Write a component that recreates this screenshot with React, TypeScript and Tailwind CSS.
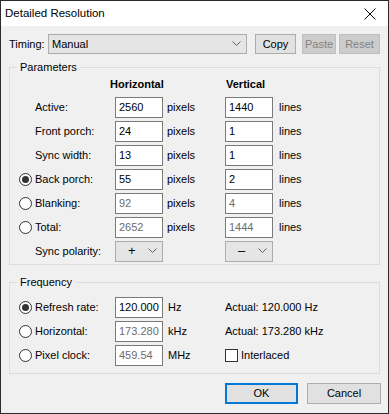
import React from 'react';

const font = { fontFamily: '"Liberation Sans", Arial, sans-serif' };

const Chevron: React.FC = () => (
  <svg width="9" height="6" viewBox="0 0 9 6" className="shrink-0">
    <polyline points="0.5,0.5 4.5,4.5 8.5,0.5" fill="none" stroke="#606060" strokeWidth="1" />
  </svg>
);

const Radio: React.FC<{ checked?: boolean }> = ({ checked }) => (
  <div className="w-[13px] h-[13px] rounded-full border border-[#333333] bg-white flex items-center justify-center shrink-0">
    {checked && <div className="w-[7px] h-[7px] rounded-full bg-[#333333]" />}
  </div>
);

const Field: React.FC<{ value: string; disabled?: boolean }> = ({ value, disabled }) => (
  <div
    className={`w-[48px] h-[21px] border border-[#7a7a7a] bg-white flex items-center pl-[3px] ${
      disabled ? 'text-[#6d6d6d]' : 'text-black'
    }`}
  >
    {value}
  </div>
);

interface RowProps {
  label: string;
  radio?: 'on' | 'off';
  h: string;
  v: string;
  disabled?: boolean;
}

const ParamRow: React.FC<RowProps> = ({ label, radio, h, v, disabled }) => (
  <div className="h-[24px] flex items-center">
    {radio ? (
      <div className="w-[105px] flex items-center pl-[9px] gap-[3px]">
        <Radio checked={radio === 'on'} />
        <span>{label}</span>
      </div>
    ) : (
      <div className="w-[105px] pl-[25px]">{label}</div>
    )}
    <Field value={h} disabled={disabled} />
    <span className="w-[62px] pl-[4px]">pixels</span>
    <Field value={v} disabled={disabled} />
    <span className="pl-[6px]">lines</span>
  </div>
);

const PolaritySelect: React.FC<{ sign: string }> = ({ sign }) => (
  <div className="w-[48px] h-[21px] border border-[#adadad] bg-[#e5e5e5] flex items-center justify-between pl-[12px] pr-[5px]">
    <span className="text-[13px]">{sign}</span>
    <Chevron />
  </div>
);

const FreqRow: React.FC<{ label: string; checked?: boolean; value: string; unit: string; disabled?: boolean; right: React.ReactNode }> = ({
  label,
  checked,
  value,
  unit,
  disabled,
  right,
}) => (
  <div className="h-[24px] flex items-center">
    <div className="w-[105px] flex items-center pl-[9px] gap-[3px]">
      <Radio checked={checked} />
      <span>{label}</span>
    </div>
    <div
      className={`w-[48px] h-[21px] border border-[#7a7a7a] bg-white flex items-center pl-[3px] ${
        disabled ? 'text-[#6d6d6d]' : 'text-black'
      }`}
    >
      {value}
    </div>
    <span className="w-[62px] pl-[5px]">{unit}</span>
    {right}
  </div>
);

export default function App() {
  return (
    <div
      className="w-[389px] h-[414px] border border-[#2b2b2b] bg-[#f0f0f0] flex flex-col text-[11px] text-black"
      style={font}
    >
      {/* title bar */}
      <div className="h-[25px] bg-white flex items-center justify-between pl-[4px] pr-[12px] text-[11.5px]">
        <span>Detailed Resolution</span>
        <svg width="12" height="12" viewBox="0 0 12 12">
          <path d="M0.5 0.5 L11.5 11.5 M11.5 0.5 L0.5 11.5" stroke="#000" strokeWidth="1" />
        </svg>
      </div>

      {/* timing */}
      <div className="h-[20px] mt-[8px] flex items-center pl-[8px]">
        <span className="w-[39px]">Timing:</span>
        <div className="w-[199px] h-[20px] border border-[#acacac] bg-[#e5e5e5] flex items-center justify-between pl-[3px] pr-[5px]">
          <span>Manual</span>
          <Chevron />
        </div>
        <div className="ml-[8px] w-[41px] h-[20px] border border-[#adadad] bg-[#e1e1e1] flex items-center justify-center">
          Copy
        </div>
        <div className="ml-[6px] w-[34px] h-[20px] border border-[#bfbfbf] bg-[#cccccc] text-[#838383] flex items-center justify-center">
          Paste
        </div>
        <div className="ml-[3px] w-[41px] h-[20px] border border-[#bfbfbf] bg-[#cccccc] text-[#838383] flex items-center justify-center">
          Reset
        </div>
      </div>

      {/* parameters */}
      <div className="relative mt-[13px] ml-[8px] w-[371px] h-[198px] border border-[#dcdcdc]">
        <span className="absolute left-[7px] -top-[8px] bg-[#f0f0f0] px-[3px] leading-[14px]">Parameters</span>
        <div className="h-[27px] flex items-end pb-[3px] font-bold">
          <span className="ml-[100px] w-[116px]">Horizontal</span>
          <span>Vertical</span>
        </div>
        <ParamRow label="Active:" h="2560" v="1440" />
        <ParamRow label="Front porch:" h="24" v="1" />
        <ParamRow label="Sync width:" h="13" v="1" />
        <ParamRow label="Back porch:" radio="on" h="55" v="2" />
        <ParamRow label="Blanking:" radio="off" h="92" v="4" disabled />
        <ParamRow label="Total:" radio="off" h="2652" v="1444" disabled />
        <div className="h-[24px] flex items-center">
          <div className="w-[105px] pl-[25px]">Sync polarity:</div>
          <PolaritySelect sign="+" />
          <div className="w-[62px]" />
          <PolaritySelect sign="–" />
        </div>
      </div>

      {/* frequency */}
      <div className="relative mt-[17px] ml-[8px] w-[371px] h-[92px] border border-[#dcdcdc] pt-[12px]">
        <span className="absolute left-[7px] -top-[8px] bg-[#f0f0f0] px-[3px] leading-[14px]">Frequency</span>
        <FreqRow label="Refresh rate:" checked value="120.000" unit="Hz" right={<span>Actual: 120.000 Hz</span>} />
        <FreqRow label="Horizontal:" value="173.280" unit="kHz" disabled right={<span>Actual: 173.280 kHz</span>} />
        <FreqRow
          label="Pixel clock:"
          value="459.54"
          unit="MHz"
          disabled
          right={
            <div className="flex items-center gap-[3px]">
              <div className="w-[13px] h-[13px] border border-[#333333] bg-white" />
              <span>Interlaced</span>
            </div>
          }
        />
      </div>

      {/* buttons */}
      <div className="mt-[9px] flex pl-[224px] gap-[9px]">
        <div className="w-[73px] h-[21px] border-2 border-[#0078d7] bg-[#e1e1e1] flex items-center justify-center">OK</div>
        <div className="w-[74px] h-[21px] border border-[#adadad] bg-[#e1e1e1] flex items-center justify-center">Cancel</div>
      </div>
    </div>
  );
}
